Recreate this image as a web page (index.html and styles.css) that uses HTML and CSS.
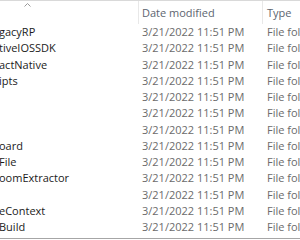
FILE: index.html
```html
<!DOCTYPE html>
<html lang="en">
<head>
    <meta charset="UTF-8">
    <meta name="viewport" content="width=device-width, initial-scale=1.0">
    <title>Folder details</title>
    <link rel="stylesheet" href="styles.css">
</head>
<body>
    <div class="list">
        <div class="head">
            <div class="col name">
                <svg class="caret" width="7" height="4" viewBox="0 0 7 4"><path d="M0.5 3.5 L3.5 0.5 L6.5 3.5" fill="none" stroke="#9a9a9a" stroke-width="1"/></svg>
            </div>
            <div class="col date">Date modified</div>
            <div class="col type">Type</div>
        </div>
        <div class="rows">
            <div class="row"><div class="name">gacyRP</div><div class="date">3/21/2022 11:51 PM</div><div class="type">File folder</div></div>
            <div class="row"><div class="name">tiveIOSSDK</div><div class="date">3/21/2022 11:51 PM</div><div class="type">File folder</div></div>
            <div class="row"><div class="name">actNative</div><div class="date">3/21/2022 11:51 PM</div><div class="type">File folder</div></div>
            <div class="row"><div class="name">ipts</div><div class="date">3/21/2022 11:51 PM</div><div class="type">File folder</div></div>
            <div class="row"><div class="name"></div><div class="date">3/21/2022 11:51 PM</div><div class="type">File folder</div></div>
            <div class="row"><div class="name"></div><div class="date">3/21/2022 11:51 PM</div><div class="type">File folder</div></div>
            <div class="row"><div class="name"><span class="edge">s</span></div><div class="date">3/21/2022 11:51 PM</div><div class="type">File folder</div></div>
            <div class="row"><div class="name">oard</div><div class="date">3/21/2022 11:51 PM</div><div class="type">File folder</div></div>
            <div class="row"><div class="name">File</div><div class="date">3/21/2022 11:51 PM</div><div class="type">File folder</div></div>
            <div class="row"><div class="name">oomExtractor</div><div class="date">3/21/2022 11:51 PM</div><div class="type">File folder</div></div>
            <div class="row"><div class="name"></div><div class="date">3/21/2022 11:51 PM</div><div class="type">File folder</div></div>
            <div class="row"><div class="name">eContext</div><div class="date">3/21/2022 11:51 PM</div><div class="type">File folder</div></div>
            <div class="row"><div class="name">Build</div><div class="date">3/21/2022 11:51 PM</div><div class="type">File folder</div></div>
        </div>
    </div>
</body>
</html>
```

FILE: styles.css
```css
body {
    margin: 0;
    background: #fff;
    font-family: "Open Sans", "Noto Sans", sans-serif;
    font-size: 11px;
    color: #1b1b1b;
    overflow: hidden;
}
.list {
    width: 300px;
    height: 239px;
    box-sizing: border-box;
    border-bottom: 1px solid #a6a6a6;
    overflow: hidden;
}
.head {
    display: grid;
    grid-template-columns: 139px 124px 1fr;
    height: 24px;
    box-sizing: border-box;
    border-top: 1px solid #d9d9d9;
}
.head .col {
    border-right: 1px solid #e8e8e8;
    padding: 4px 0 0 3px;
    line-height: 16.25px;
    color: #5d6570;
    white-space: nowrap;
    overflow: hidden;
}
.head .col.name {
    padding: 2px 0 0 24px;
    line-height: 0;
}
.head .col.type {
    border-right: none;
    padding-left: 4px;
}
.row {
    display: grid;
    grid-template-columns: 139px 124px 1fr;
    height: 16.25px;
    line-height: 16.25px;
    white-space: nowrap;
}
.row > div {
    overflow: hidden;
}
.row .name {
    text-indent: -1px;
}
.row .date {
    padding-left: 3px;
    color: #6b6b6b;
}
.row .type {
    padding-left: 4px;
    color: #6b6b6b;
}
.edge {
    display: inline-block;
    margin-left: -4px;
}
```
